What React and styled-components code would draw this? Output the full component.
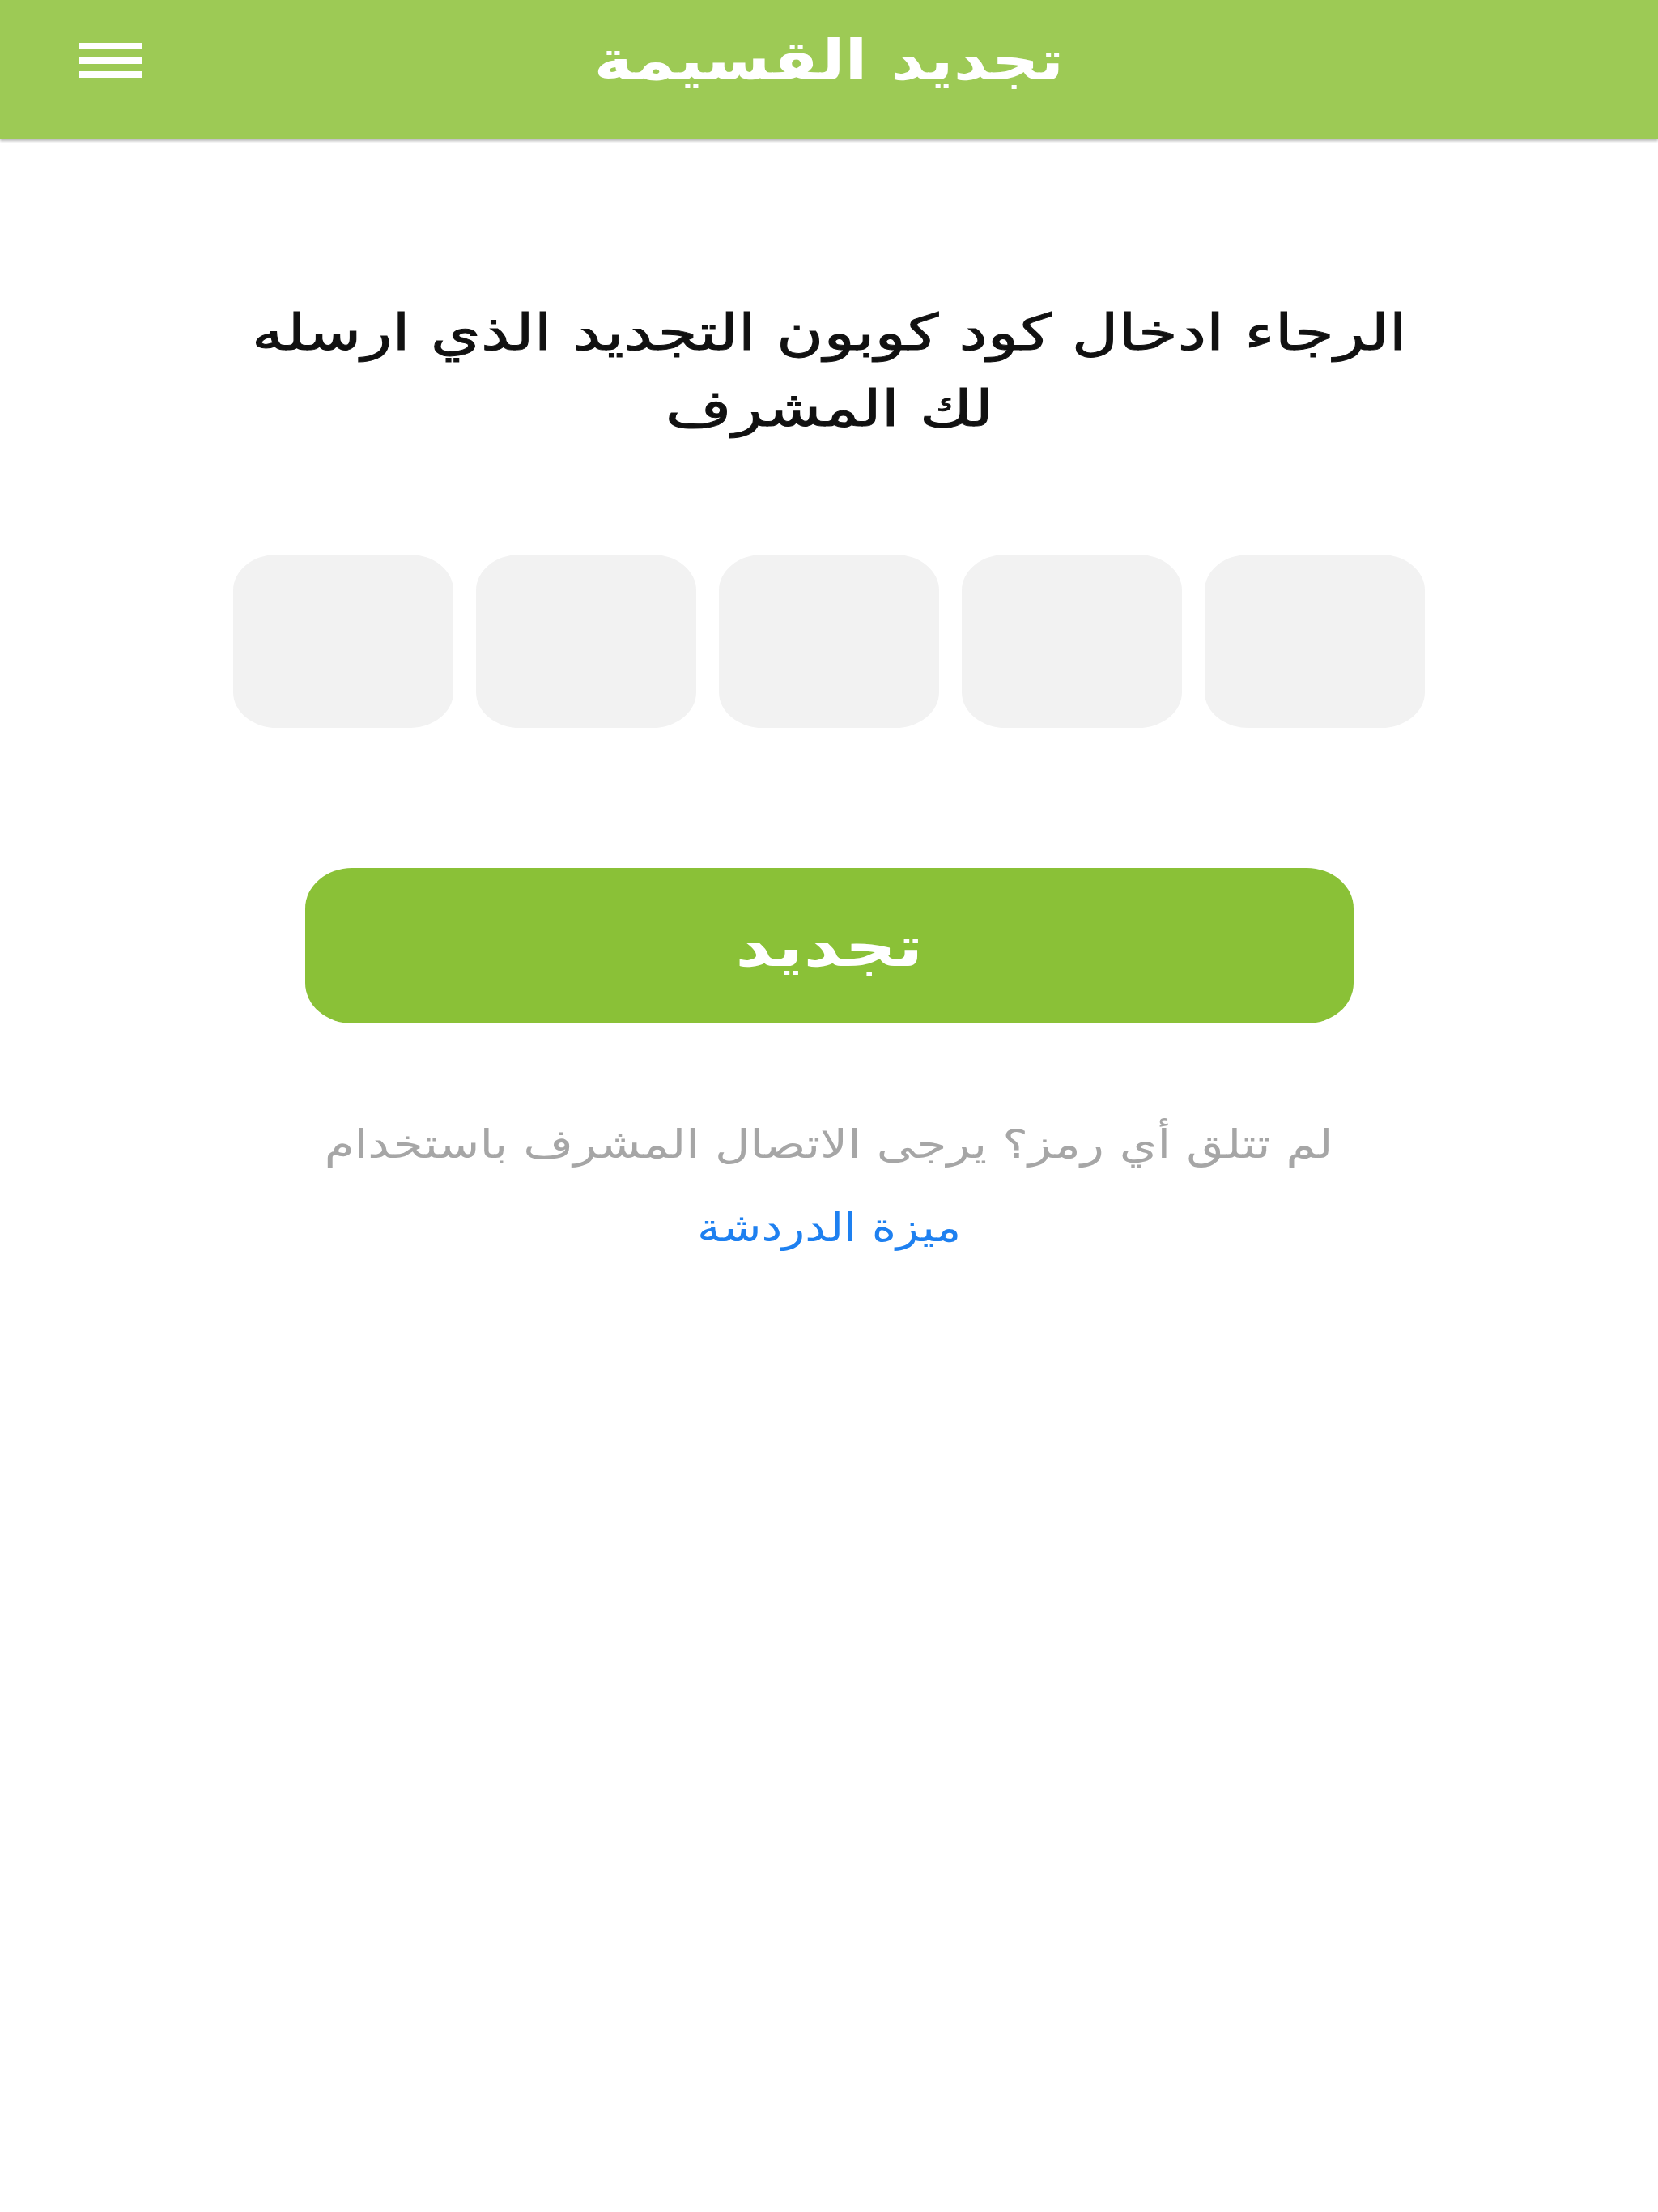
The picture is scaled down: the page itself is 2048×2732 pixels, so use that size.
import React from "react";
import styled, { createGlobalStyle } from "styled-components";

const Global = createGlobalStyle`
  html, body { margin: 0; padding: 0; background: #ffffff; }
  body { font-family: "DejaVu Sans", "Noto Sans", sans-serif; }
  * { box-sizing: border-box; }
`;

const Page = styled.div`
  width: 2048px;
  min-height: 2732px;
  background: #ffffff;
  display: flex;
  flex-direction: column;
`;

const Header = styled.header`
  height: 172px;
  background: #9dca55;
  box-shadow: 0 2px 3px rgba(0, 0, 0, 0.28);
  display: grid;
  grid-template-columns: 1fr auto 1fr;
  align-items: center;
  padding: 0 98px 22px 98px;
  direction: ltr;
  position: relative;
  z-index: 1;
`;

const MenuButton = styled.button`
  justify-self: start;
  width: 77px;
  height: 44px;
  padding: 0;
  border: 0;
  background: transparent;
  display: flex;
`;

const Title = styled.h1`
  margin: 0;
  color: #ffffff;
  font-family: "DejaVu Sans", sans-serif;
  font-weight: 700;
  font-size: 68px;
  line-height: 1;
  direction: rtl;
  transform: scaleX(${(p) => p.$stretch || 1});
  transform-origin: center;
`;

const Main = styled.main`
  direction: rtl;
  display: flex;
  flex-direction: column;
  align-items: center;
  padding-top: 192px;
`;

const Prompt = styled.p`
  margin: 0;
  color: #111111;
  font-family: "DejaVu Sans", sans-serif;
  font-size: 62px;
  line-height: 94px;
  text-align: center;
  -webkit-text-stroke: 1px #111111;
  transform: scaleX(${(p) => p.$stretch || 1});
`;

const CodeRow = styled.div`
  margin-top: 133px;
  display: flex;
  gap: 28px;
  direction: ltr;
`;

const CodeBox = styled.input`
  width: 272px;
  height: 214px;
  border: 0;
  border-radius: 54px / 44px;
  background: #f2f2f2;
  outline: none;
  text-align: center;
  font-size: 80px;
  font-family: "DejaVu Sans", sans-serif;
`;

const RenewButton = styled.button`
  margin-top: 173px;
  width: 1295px;
  height: 192px;
  border: 0;
  border-radius: 58px / 50px;
  background: #8ac137;
  color: #ffffff;
  font-family: "DejaVu Sans", sans-serif;
  font-weight: 700;
  font-size: 68px;
  display: flex;
  align-items: center;
  justify-content: center;
  padding-top: 4px;
`;

const ButtonLabel = styled.span`
  display: inline-block;
  transform: scaleX(${(p) => p.$stretch || 1});
`;

const Help = styled.div`
  margin-top: 98px;
  display: flex;
  flex-direction: column;
  align-items: center;
  font-family: "DejaVu Sans", sans-serif;
  font-size: 49px;
  line-height: 103px;
  text-align: center;
`;

const HelpText = styled.span`
  color: #a6a6a6;
  display: inline-block;
  transform: scaleX(${(p) => p.$stretch || 1});
`;

const ChatLink = styled.a`
  color: #1e80f0;
  text-decoration: none;
  display: inline-block;
  transform: scaleX(${(p) => p.$stretch || 1});
`;

function MenuIcon() {
  return (
    <svg width="77" height="44" viewBox="0 0 77 44" aria-hidden="true">
      <rect x="0" y="0" width="77" height="8" fill="#ffffff" />
      <rect x="0" y="18" width="77" height="8" fill="#ffffff" />
      <rect x="0" y="35" width="77" height="8" fill="#ffffff" />
    </svg>
  );
}

export default function App() {
  return (
    <>
      <Global />
      <Page>
        <Header>
          <MenuButton aria-label="menu">
            <MenuIcon />
          </MenuButton>
          <Title $stretch={1.2}>تجديد القسيمة</Title>
          <span />
        </Header>
        <Main>
          <Prompt $stretch={1.28}>
            الرجاء ادخال كود كوبون التجديد الذي ارسله
            <br />
            لك المشرف
          </Prompt>
          <CodeRow>
            {[0, 1, 2, 3, 4].map((i) => (
              <CodeBox key={i} maxLength={1} />
            ))}
          </CodeRow>
          <RenewButton>
            <ButtonLabel $stretch={1.3}>تجديد</ButtonLabel>
          </RenewButton>
          <Help>
            <HelpText $stretch={1.22}>لم تتلق أي رمز؟ يرجى الاتصال المشرف باستخدام</HelpText>
            <ChatLink href="#" $stretch={1.18}>ميزة الدردشة</ChatLink>
          </Help>
        </Main>
      </Page>
    </>
  );
}
